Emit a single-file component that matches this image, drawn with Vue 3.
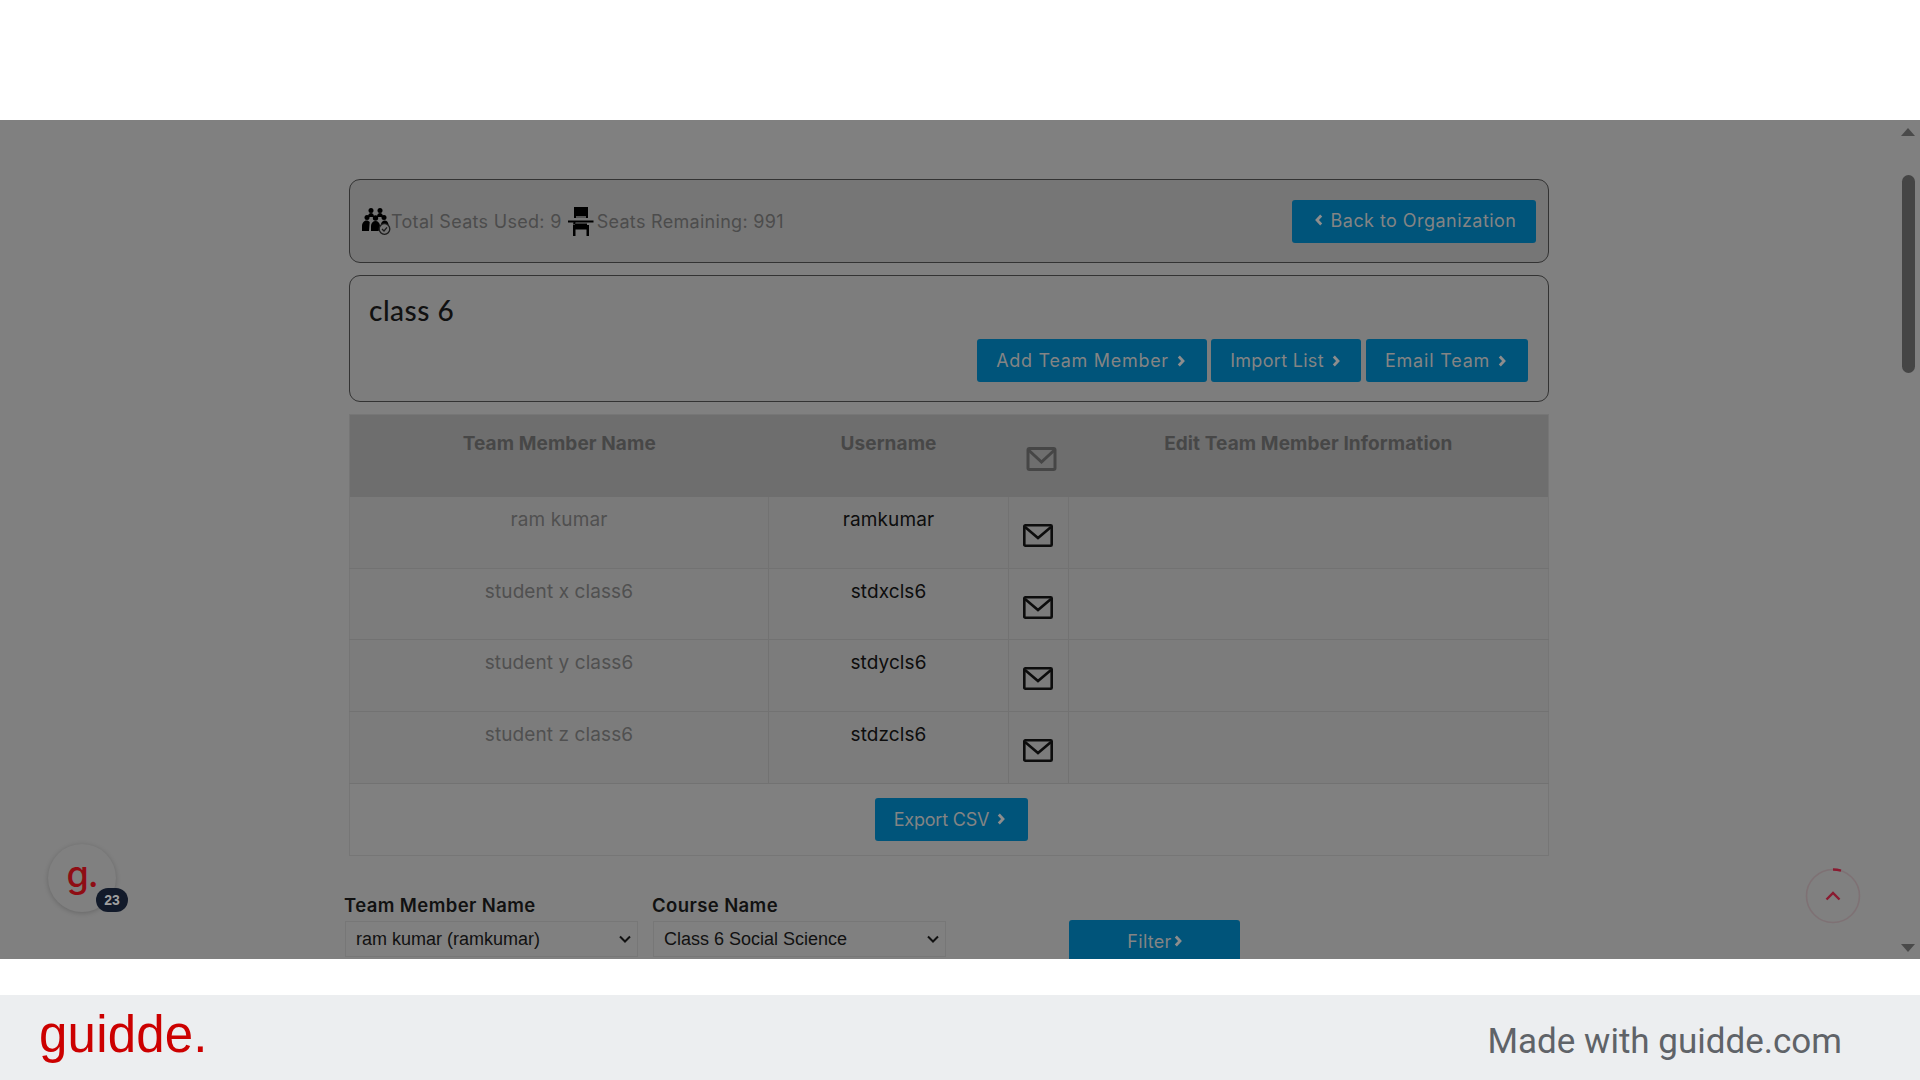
<script setup>
const members = [
  { name: 'ram kumar', username: 'ramkumar' },
  { name: 'student x class6', username: 'stdxcls6' },
  { name: 'student y class6', username: 'stdycls6' },
  { name: 'student z class6', username: 'stdzcls6' },
]
</script>

<template>
  <div class="page">
    <div class="top-white"></div>
    <main class="stage">
      <div class="content">
        <section class="box seats">
          <div class="seat-info">
            <svg class="i-group" viewBox="0 0 29 27" width="29" height="27">
              <g fill="#000">
                <circle cx="9" cy="2.600" r="2.500" /><circle cx="18" cy="2.600" r="2.500" />
                <path d="M6 9c0-3 1.500-4 3-4s3 1 3 4zM15 9c0-3 1.500-4 3-4s3 1 3 4z" />
                <circle cx="5" cy="9.500" r="2.500" /><circle cx="13.500" cy="10" r="2.700" /><circle cx="22" cy="9.500" r="2.500" />
                <path d="M0 23v-5c0-3 2-5.500 4.500-5.500 1.500 0 2.500.600 3.200 1.500L7 23zM9 23v-5c0-3 2-5 4.500-5s4.500 2 4.500 5v2l-1.500 3zM19 16c.600-2 2-3.500 3.500-3.500 2.500 0 4 1.800 4 4.500-3 .200-6 .500-7.500-1z" />
              </g>
              <circle cx="22.500" cy="21" r="5.300" fill="#747474" stroke="#1c1c1c" stroke-width="1.300" />
              <path d="M20 21l2 2 3-3.700" fill="none" stroke="#1c1c1c" stroke-width="1.300" />
            </svg>
            <span>Total Seats Used: 9</span>
            <svg class="i-chair" viewBox="0 0 26 29" width="26" height="29">
              <path d="M6 0h14v11H6z" fill="#000" />
              <path d="M8 9h10v2H8z" fill="#555" />
              <path d="M0 13.500h25.500v2H7.500l-.500 2H5l.500-2H0z" fill="#000" />
              <path d="M5 18h16v11h-2.500v-6.500h-11V29H5z" fill="#000" />
              <path d="M7 16.500h12v2H7z" fill="#000" />
            </svg>
            <span>Seats Remaining: 991</span>
          </div>
          <button class="btn back">
            <svg class="chev" viewBox="0 0 8 12" width="8" height="12"><path d="M6.200 1.500 2 6l4.200 4.500" /></svg>
            Back to Organization
          </button>
        </section>

        <section class="box team">
          <h1>class 6</h1>
          <div class="team-actions">
            <button class="btn add">Add Team Member <svg class="chev" viewBox="0 0 8 12" width="8" height="12"><path d="M1.800 1.500 6 6l-4.200 4.500" /></svg></button>
            <button class="btn import">Import List <svg class="chev" viewBox="0 0 8 12" width="8" height="12"><path d="M1.800 1.500 6 6l-4.200 4.500" /></svg></button>
            <button class="btn email">Email Team <svg class="chev" viewBox="0 0 8 12" width="8" height="12"><path d="M1.800 1.500 6 6l-4.200 4.500" /></svg></button>
          </div>
        </section>

        <table class="members">
          <colgroup>
            <col class="c1" /><col class="c2" /><col class="c3" /><col class="c4" />
          </colgroup>
          <thead>
            <tr>
              <th>Team Member Name</th>
              <th>Username</th>
              <th class="mail-head">
                <svg viewBox="0 0 30 24" width="31" height="24" class="mail-h">
                  <rect x="1.500" y="1.500" width="27" height="21" rx="1.500" />
                  <path d="M2 3l13 12L28 3" />
                </svg>
              </th>
              <th>Edit Team Member Information</th>
            </tr>
          </thead>
          <tbody>
            <tr v-for="m in members" :key="m.username">
              <td class="name">{{ m.name }}</td>
              <td class="user">{{ m.username }}</td>
              <td class="mail">
                <svg viewBox="0 0 30 23" width="30" height="23" class="mail-r">
                  <rect x="1.300" y="1.300" width="27.400" height="20.400" rx="1" />
                  <path d="M2 3l13 11L28 3" />
                </svg>
              </td>
              <td></td>
            </tr>
          </tbody>
          <tfoot>
            <tr>
              <td colspan="4" class="export-cell">
                <button class="btn export">Export CSV <svg class="chev" viewBox="0 0 8 12" width="8" height="12"><path d="M1.800 1.500 6 6l-4.200 4.500" /></svg></button>
              </td>
            </tr>
          </tfoot>
        </table>

        <form class="filters" @submit.prevent>
          <label class="field">
            <span>Team Member Name</span>
            <span class="sel">
              <select><option>ram kumar (ramkumar)</option></select>
              <svg viewBox="0 0 12 8" width="12" height="8"><path d="M1 1.500l5 5 5-5" /></svg>
            </span>
          </label>
          <label class="field">
            <span>Course Name</span>
            <span class="sel">
              <select><option>Class 6 Social Science</option></select>
              <svg viewBox="0 0 12 8" width="12" height="8"><path d="M1 1.500l5 5 5-5" /></svg>
            </span>
          </label>
          <button class="btn filter">Filter<svg class="chev" viewBox="0 0 8 12" width="8" height="12"><path d="M1.800 1.500 6 6l-4.200 4.500" /></svg></button>
        </form>
      </div>

      <div class="scrollbar">
        <i class="arrow up"></i>
        <i class="thumb"></i>
        <i class="arrow down"></i>
      </div>

      <div class="g-badge">
        <span class="g-letter">g.</span>
        <span class="count">23</span>
      </div>

      <div class="to-top">
        <svg viewBox="0 0 56 56" width="56" height="56">
          <circle cx="28" cy="28" r="26.500" fill="none" stroke="#7e7174" stroke-width="1.600" />
          <path d="M28 1.500a26.500 26.500 0 0 1 8 1.200" fill="none" stroke="#8a1a30" stroke-width="2.400" />
          <path d="M21.500 31.500l6.500-6.500 6.500 6.500" fill="none" stroke="#8a1a30" stroke-width="2.400" />
        </svg>
      </div>
    </main>
    <div class="gap-white"></div>
    <footer class="footer">
      <span class="logo">guidde.</span>
      <span class="made">Made with guidde.com</span>
    </footer>
  </div>
</template>

<style scoped>
.page {
  width: 1920px;
  height: 1080px;
  display: flex;
  flex-direction: column;
  overflow: hidden;
  background: #fff;
  font-family: Inter, "Open Sans", sans-serif;
}
.top-white { height: 120px; flex: none; }
.gap-white { height: 36px; flex: none; }
.stage {
  position: relative;
  height: 839px;
  flex: none;
  overflow: hidden;
  background: #808080;
  padding: 59px 0 0 349px;
  box-sizing: border-box;
}
.content { width: 1200px; }
.box {
  box-sizing: border-box;
  border: 1px solid #333;
  border-radius: 11px;
}
.seats {
  height: 84px;
  background: #767676;
  display: flex;
  align-items: center;
  justify-content: space-between;
  padding: 0 12px;
  margin-bottom: 12px;
}
.seat-info {
  display: flex;
  align-items: center;
  font-size: 18px;
  letter-spacing: 0.300px;
  color: #4c4c4c;
}
.i-chair { margin: 0 3px 0 6px; }
.btn {
  box-sizing: border-box;
  height: 43px;
  border: 0;
  border-radius: 3px;
  background: #00547a;
  color: #848484;
  font: 400 18px Inter, "Open Sans", sans-serif;
  display: inline-flex;
  align-items: center;
  justify-content: center;
  gap: 8px;
  padding: 0;
  white-space: nowrap;
}
.chev path { fill: none; stroke: #8d8d8d; stroke-width: 2.800; }
.back { width: 244px; letter-spacing: 0.450px; padding: 0 0 2px 3px; }
.team {
  height: 127px;
  background: #7d7d7d;
  padding: 16px 20px 0 19px;
  margin-bottom: 12px;
  display: flex;
  flex-direction: column;
}
.team h1 {
  margin: 0;
  font: 500 28px/36px Lato, sans-serif;
  letter-spacing: 0.500px;
  color: #111;
}
.team-actions {
  margin-top: 11px;
  display: flex;
  justify-content: flex-end;
  gap: 4px;
}
.team-actions .add { width: 230px; letter-spacing: 0.700px; padding-right: 3px; }
.team-actions .import { width: 150px; letter-spacing: 0.300px; padding-right: 2px; }
.team-actions .email { width: 162px; margin-left: 1px; letter-spacing: 0.800px; padding-right: 3px; }
.members {
  width: 1200px;
  table-layout: fixed;
  border-collapse: collapse;
  border: 1px solid #767676;
  font-size: 19px;
  letter-spacing: 0.100px;
  background: #7a7a7a;
}
.c1 { width: 419px; }
.c2 { width: 240px; }
.c3 { width: 60px; }
.members thead tr { height: 82px; background: #6e6e6e; }
.members th {
  padding: 15px 0 0;
  vertical-align: top;
  text-align: center;
  font-weight: 700;
  font-size: 19px;
  line-height: 27px;
  letter-spacing: 0.100px;
  color: #474747;
}
.members th.mail-head { padding: 32px 0 0 17px; text-align: left; }
.mail-h { display: block; }
.mail-h rect, .mail-h path { fill: none; stroke: #464646; stroke-width: 3; }
.members tbody tr { height: 71.670px; border-bottom: 1px solid #727272; }
.members tbody tr:not(:first-child) td { background: #7c7c7c; }
.members td { padding: 9px 0 0; vertical-align: top; text-align: center; line-height: 27px; }
.members tbody td { border-left: 1px solid #727272; }
.members tbody td:first-child { border-left: 0; }
.name { color: #505050; }
.user { color: #0d0d0d; }
.members td.mail { padding: 27px 0 0 14px; text-align: left; }
.mail-r { display: block; }
.mail-r rect, .mail-r path { fill: none; stroke: #0d0d0d; stroke-width: 2.600; }
.members tfoot tr { height: 72px; background: #808080; }
.members td.export-cell { padding: 14px 0 0 5px; }
.export { width: 153px; letter-spacing: -0.200px; padding-right: 4px; }
.filters {
  margin: 36px 0 0 -4px;
  display: grid;
  grid-template-columns: 293px 293px 171px;
  column-gap: 15px;
  align-items: start;
}
.field { display: flex; flex-direction: column; }
.field > span:first-child {
  font-weight: 600;
  font-size: 18.500px;
  line-height: 27px;
  letter-spacing: 0.400px;
  color: #111;
  margin-left: -1px;
}
.sel { position: relative; display: block; margin-top: 2px; }
.sel svg { position: absolute; right: 7px; top: 14px; }
.sel path { fill: none; stroke: #111; stroke-width: 2; }
.sel select {
  appearance: none;
  box-sizing: border-box;
  display: block;
  width: 100%;
  height: 36px;
  padding: 0 4px 0 10px;
  border: 1px solid #777;
  border-radius: 0;
  background: #808080;
  color: #111;
  font: 400 18px "Liberation Sans", Arial, sans-serif;
}
.filter { margin: 28px 0 0 108px; width: 171px; gap: 2px; letter-spacing: 0.300px; }
.scrollbar { position: absolute; top: 0; right: 4px; bottom: 0; width: 15px; }
.arrow {
  position: absolute;
  left: 0;
  width: 0;
  height: 0;
  border-left: 7.500px solid transparent;
  border-right: 7.500px solid transparent;
}
.arrow.up { top: 8px; border-bottom: 8px solid #4a4a4a; }
.arrow.down { bottom: 7px; border-top: 8px solid #4a4a4a; }
.thumb {
  position: absolute;
  left: 1px;
  top: 55px;
  width: 13px;
  height: 198px;
  border-radius: 7px;
  background: #454545;
}
.g-badge {
  position: absolute;
  left: 48px;
  top: 724px;
  width: 68px;
  height: 68px;
  border-radius: 50%;
  background: #808080;
  box-shadow: 0 1px 5px rgba(0, 0, 0, 0.2);
  display: flex;
  align-items: center;
  justify-content: center;
}
.g-letter {
  font: 500 36px/1 Inter, sans-serif;
  letter-spacing: -1px;
  color: #8f0d14;
  margin-top: -8px;
}
.count {
  position: absolute;
  left: 48px;
  top: 44px;
  width: 32px;
  height: 24px;
  border-radius: 12px;
  background: #121a2a;
  color: #a0a0a0;
  font: 700 14px/24px "Liberation Sans", Arial, sans-serif;
  text-align: center;
}
.to-top { position: absolute; left: 1805px; top: 748px; width: 56px; height: 56px; }
.footer {
  flex: 1;
  background: #eceef0;
  display: flex;
  align-items: center;
  justify-content: space-between;
  padding: 0 78px 0 39px;
}
.logo {
  font: 400 51px/1 "Liberation Sans", Arial, sans-serif;
  letter-spacing: 0.200px;
  color: #cc0000;
  margin-top: -7px;
}
.made {
  font: 400 35px/1 Roboto, sans-serif;
  color: #5f6368;
  margin-top: 7px;
}
</style>
